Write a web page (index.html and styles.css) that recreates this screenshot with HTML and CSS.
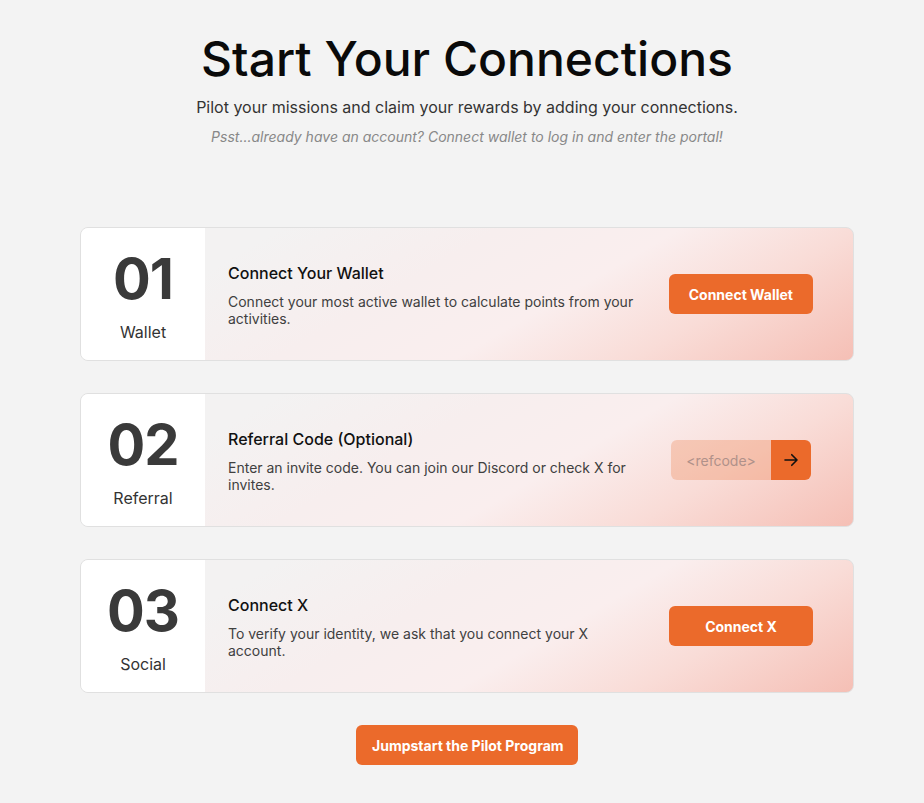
FILE: index.html
```html
<!DOCTYPE html>
<html>

<head>
    <title>Start Your Connections</title>
    <link rel="stylesheet" href="styles.css">
</head>

<body>
    <div class="page">
        <div class="intro">
            <h1>Start Your Connections</h1>
            <p class="lead">Pilot your missions and claim your rewards by adding your connections.</p>
            <p class="hint">Psst...already have an account? Connect wallet to log in and enter the portal!</p>
        </div>

        <div class="steps">
            <div class="step">
                <div class="step-num">
                    <span class="num">01</span>
                    <span class="tag">Wallet</span>
                </div>
                <div class="step-body">
                    <div class="step-text">
                        <h2>Connect Your Wallet</h2>
                        <p>Connect your most active wallet to calculate points from your activities.</p>
                    </div>
                    <button class="btn">Connect Wallet</button>
                </div>
            </div>

            <div class="step">
                <div class="step-num">
                    <span class="num">02</span>
                    <span class="tag">Referral</span>
                </div>
                <div class="step-body">
                    <div class="step-text">
                        <h2>Referral Code (Optional)</h2>
                        <p>Enter an invite code. You can join our Discord or check X for invites.</p>
                    </div>
                    <div class="ref">
                        <input type="text" placeholder="<refcode>">
                        <button class="ref-go">
                            <svg width="18" height="18" viewBox="0 0 24 24" fill="none" stroke="#111" stroke-width="2.2" stroke-linecap="round" stroke-linejoin="round">
                                <path d="M4 12h16M13 5l7 7-7 7"/>
                            </svg>
                        </button>
                    </div>
                </div>
            </div>

            <div class="step">
                <div class="step-num">
                    <span class="num">03</span>
                    <span class="tag">Social</span>
                </div>
                <div class="step-body">
                    <div class="step-text">
                        <h2>Connect X</h2>
                        <p>To verify your identity, we ask that you connect your X account.</p>
                    </div>
                    <button class="btn">Connect X</button>
                </div>
            </div>
        </div>

        <div class="footer">
            <button class="btn btn-wide">Jumpstart the Pilot Program</button>
        </div>
    </div>
</body>

</html>
```

FILE: styles.css
```css
body {
    margin: 0;
    padding-left: 10px;
    background-color: #f3f3f3;
    font-family: Inter, "Noto Sans", sans-serif;
    color: #111;
}

.page {
    width: 774px;
    margin: 0 auto;
    padding-top: 30px;
}

.intro {
    text-align: center;
}

h1 {
    margin: 0;
    font-size: 48px;
    font-weight: 500;
    line-height: 58px;
    color: #0a0a0a;
}

.lead {
    margin: 9px 0 0;
    font-size: 16px;
    color: #333;
}

.hint {
    margin: 11px 0 0;
    font-size: 14px;
    font-style: italic;
    color: #888;
}

.steps {
    display: flex;
    flex-direction: column;
    gap: 32px;
    margin-top: 82px;
}

.step {
    display: flex;
    height: 134px;
    box-sizing: border-box;
    border: 1px solid #e0e0e0;
    border-radius: 8px;
    overflow: hidden;
    background: linear-gradient(150deg, #f3f2f2 20%, #f7eeee 42%, #faeeee 60%, #f9dcd7 78%, #f5bfb5 100%);
}

.step-num {
    width: 124px;
    flex-shrink: 0;
    background-color: #fff;
    display: flex;
    flex-direction: column;
    align-items: center;
    padding-top: 19px;
    box-sizing: border-box;
}

.num {
    font-size: 56px;
    font-weight: 700;
    line-height: 64px;
    color: #3a3a3a;
    letter-spacing: -1px;
}

.tag {
    margin-top: 11px;
    font-size: 16px;
    color: #333;
}

.step-body {
    flex: 1;
    display: flex;
    align-items: center;
    justify-content: space-between;
    padding: 0 40px 0 23px;
}

.step-text {
    width: 420px;
    padding-top: 2px;
}

h2 {
    margin: 0;
    font-size: 16px;
    font-weight: 500;
    color: #111;
}

.step-text p {
    margin: 10px 0 0;
    font-size: 14px;
    line-height: 17px;
    color: #404040;
}

.btn {
    height: 40px;
    padding: 0 20px;
    border: none;
    border-radius: 6px;
    background-color: #eb6a2b;
    color: #fff;
    font-family: Inter, "Noto Sans", sans-serif;
    font-size: 14px;
    font-weight: 700;
    min-width: 144px;
    white-space: nowrap;
}

.ref {
    display: flex;
    height: 40px;
    margin-right: 2px;
}

.ref input {
    width: 100px;
    box-sizing: border-box;
    border: none;
    border-radius: 6px 0 0 6px;
    background-color: rgba(235, 106, 43, 0.25);
    text-align: center;
    font-family: Inter, "Noto Sans", sans-serif;
    font-size: 14px;
}

.ref input::placeholder {
    color: #b0918a;
}

.ref-go {
    width: 40px;
    border: none;
    border-radius: 0 6px 6px 0;
    background-color: #eb6a2b;
    display: flex;
    align-items: center;
    justify-content: center;
    padding: 0;
}

.footer {
    display: flex;
    justify-content: center;
    margin-top: 32px;
}

.btn-wide {
    width: 222px;
    padding: 0 16px;
}
```
